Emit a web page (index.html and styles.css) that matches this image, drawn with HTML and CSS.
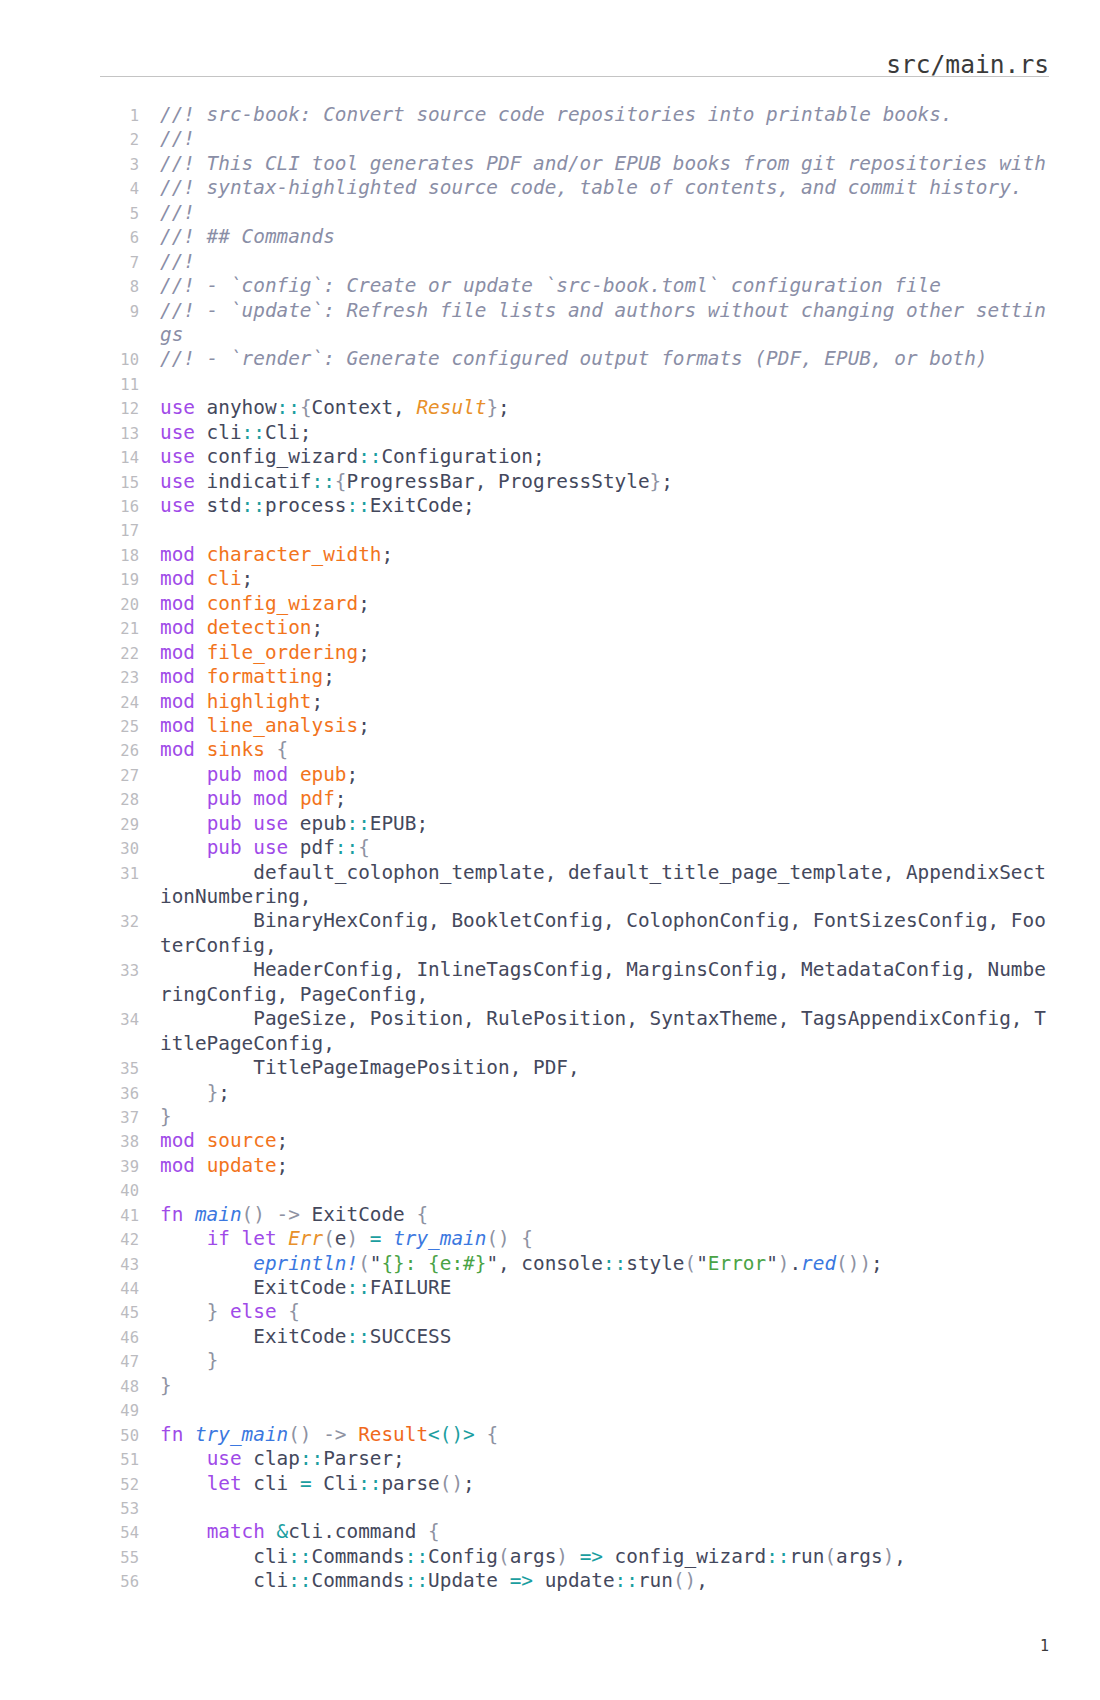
FILE: index.html
```html
<!DOCTYPE html>
<html lang="en">
<head>
<meta charset="utf-8">
<title>src/main.rs</title>
<link rel="stylesheet" href="styles.css">
</head>
<body>
<div class="page">
  <header class="hdr">src/main.rs</header>
  <div class="src">
    <div class="ln"><span class="n">1</span><span class="code"><span class="c">//! src-book: Convert source code repositories into printable books.</span></span></div>
    <div class="ln"><span class="n">2</span><span class="code"><span class="c">//!</span></span></div>
    <div class="ln"><span class="n">3</span><span class="code"><span class="c">//! This CLI tool generates PDF and/or EPUB books from git repositories with</span></span></div>
    <div class="ln"><span class="n">4</span><span class="code"><span class="c">//! syntax-highlighted source code, table of contents, and commit history.</span></span></div>
    <div class="ln"><span class="n">5</span><span class="code"><span class="c">//!</span></span></div>
    <div class="ln"><span class="n">6</span><span class="code"><span class="c">//! ## Commands</span></span></div>
    <div class="ln"><span class="n">7</span><span class="code"><span class="c">//!</span></span></div>
    <div class="ln"><span class="n">8</span><span class="code"><span class="c">//! - `config`: Create or update `src-book.toml` configuration file</span></span></div>
    <div class="ln"><span class="n">9</span><span class="code"><span class="c">//! - `update`: Refresh file lists and authors without changing other settings</span></span></div>
    <div class="ln"><span class="n">10</span><span class="code"><span class="c">//! - `render`: Generate configured output formats (PDF, EPUB, or both)</span></span></div>
    <div class="ln"><span class="n">11</span><span class="code"> </span></div>
    <div class="ln"><span class="n">12</span><span class="code"><span class="k">use</span> anyhow<span class="p">::</span><span class="b">{</span>Context, <span class="t">Result</span><span class="b">}</span>;</span></div>
    <div class="ln"><span class="n">13</span><span class="code"><span class="k">use</span> cli<span class="p">::</span>Cli;</span></div>
    <div class="ln"><span class="n">14</span><span class="code"><span class="k">use</span> config_wizard<span class="p">::</span>Configuration;</span></div>
    <div class="ln"><span class="n">15</span><span class="code"><span class="k">use</span> indicatif<span class="p">::</span><span class="b">{</span>ProgressBar, ProgressStyle<span class="b">}</span>;</span></div>
    <div class="ln"><span class="n">16</span><span class="code"><span class="k">use</span> std<span class="p">::</span>process<span class="p">::</span>ExitCode;</span></div>
    <div class="ln"><span class="n">17</span><span class="code"> </span></div>
    <div class="ln"><span class="n">18</span><span class="code"><span class="k">mod</span> <span class="m">character_width</span>;</span></div>
    <div class="ln"><span class="n">19</span><span class="code"><span class="k">mod</span> <span class="m">cli</span>;</span></div>
    <div class="ln"><span class="n">20</span><span class="code"><span class="k">mod</span> <span class="m">config_wizard</span>;</span></div>
    <div class="ln"><span class="n">21</span><span class="code"><span class="k">mod</span> <span class="m">detection</span>;</span></div>
    <div class="ln"><span class="n">22</span><span class="code"><span class="k">mod</span> <span class="m">file_ordering</span>;</span></div>
    <div class="ln"><span class="n">23</span><span class="code"><span class="k">mod</span> <span class="m">formatting</span>;</span></div>
    <div class="ln"><span class="n">24</span><span class="code"><span class="k">mod</span> <span class="m">highlight</span>;</span></div>
    <div class="ln"><span class="n">25</span><span class="code"><span class="k">mod</span> <span class="m">line_analysis</span>;</span></div>
    <div class="ln"><span class="n">26</span><span class="code"><span class="k">mod</span> <span class="m">sinks</span> <span class="b">{</span></span></div>
    <div class="ln"><span class="n">27</span><span class="code">    <span class="k">pub</span> <span class="k">mod</span> <span class="m">epub</span>;</span></div>
    <div class="ln"><span class="n">28</span><span class="code">    <span class="k">pub</span> <span class="k">mod</span> <span class="m">pdf</span>;</span></div>
    <div class="ln"><span class="n">29</span><span class="code">    <span class="k">pub</span> <span class="k">use</span> epub<span class="p">::</span>EPUB;</span></div>
    <div class="ln"><span class="n">30</span><span class="code">    <span class="k">pub</span> <span class="k">use</span> pdf<span class="p">::</span><span class="b">{</span></span></div>
    <div class="ln"><span class="n">31</span><span class="code">        default_colophon_template, default_title_page_template, AppendixSectionNumbering,</span></div>
    <div class="ln"><span class="n">32</span><span class="code">        BinaryHexConfig, BookletConfig, ColophonConfig, FontSizesConfig, FooterConfig,</span></div>
    <div class="ln"><span class="n">33</span><span class="code">        HeaderConfig, InlineTagsConfig, MarginsConfig, MetadataConfig, NumberingConfig, PageConfig,</span></div>
    <div class="ln"><span class="n">34</span><span class="code">        PageSize, Position, RulePosition, SyntaxTheme, TagsAppendixConfig, TitlePageConfig,</span></div>
    <div class="ln"><span class="n">35</span><span class="code">        TitlePageImagePosition, PDF,</span></div>
    <div class="ln"><span class="n">36</span><span class="code">    <span class="b">}</span>;</span></div>
    <div class="ln"><span class="n">37</span><span class="code"><span class="b">}</span></span></div>
    <div class="ln"><span class="n">38</span><span class="code"><span class="k">mod</span> <span class="m">source</span>;</span></div>
    <div class="ln"><span class="n">39</span><span class="code"><span class="k">mod</span> <span class="m">update</span>;</span></div>
    <div class="ln"><span class="n">40</span><span class="code"> </span></div>
    <div class="ln"><span class="n">41</span><span class="code"><span class="k">fn</span> <span class="f">main</span><span class="b">()</span> <span class="b">-&gt;</span> ExitCode <span class="b">{</span></span></div>
    <div class="ln"><span class="n">42</span><span class="code">    <span class="k">if</span> <span class="k">let</span> <span class="t">Err</span><span class="b">(</span>e<span class="b">)</span> <span class="p">=</span> <span class="f">try_main</span><span class="b">()</span> <span class="b">{</span></span></div>
    <div class="ln"><span class="n">43</span><span class="code">        <span class="f">eprintln!</span><span class="b">(</span>"<span class="s">{}: {e:#}</span>", console<span class="p">::</span>style<span class="b">(</span>"<span class="s">Error</span>"<span class="b">)</span>.<span class="f">red</span><span class="b">()</span><span class="b">)</span>;</span></div>
    <div class="ln"><span class="n">44</span><span class="code">        ExitCode<span class="p">::</span>FAILURE</span></div>
    <div class="ln"><span class="n">45</span><span class="code">    <span class="b">}</span> <span class="k">else</span> <span class="b">{</span></span></div>
    <div class="ln"><span class="n">46</span><span class="code">        ExitCode<span class="p">::</span>SUCCESS</span></div>
    <div class="ln"><span class="n">47</span><span class="code">    <span class="b">}</span></span></div>
    <div class="ln"><span class="n">48</span><span class="code"><span class="b">}</span></span></div>
    <div class="ln"><span class="n">49</span><span class="code"> </span></div>
    <div class="ln"><span class="n">50</span><span class="code"><span class="k">fn</span> <span class="f">try_main</span><span class="b">()</span> <span class="b">-&gt;</span> <span class="r">Result</span><span class="p">&lt;()&gt;</span> <span class="b">{</span></span></div>
    <div class="ln"><span class="n">51</span><span class="code">    <span class="k">use</span> clap<span class="p">::</span>Parser;</span></div>
    <div class="ln"><span class="n">52</span><span class="code">    <span class="k">let</span> cli <span class="p">=</span> Cli<span class="p">::</span>parse<span class="b">()</span>;</span></div>
    <div class="ln"><span class="n">53</span><span class="code"> </span></div>
    <div class="ln"><span class="n">54</span><span class="code">    <span class="k">match</span> <span class="p">&amp;</span>cli.command <span class="b">{</span></span></div>
    <div class="ln"><span class="n">55</span><span class="code">        cli<span class="p">::</span>Commands<span class="p">::</span>Config<span class="b">(</span>args<span class="b">)</span> <span class="p">=&gt;</span> config_wizard<span class="p">::</span>run<span class="b">(</span>args<span class="b">)</span>,</span></div>
    <div class="ln"><span class="n">56</span><span class="code">        cli<span class="p">::</span>Commands<span class="p">::</span>Update <span class="p">=&gt;</span> update<span class="p">::</span>run<span class="b">()</span>,</span></div>
  </div>
  <footer class="folio">1</footer>
</div>
</body>
</html>
```

FILE: styles.css
```css
html, body {
  margin: 0;
  padding: 0;
  background: #ffffff;
}

.page {
  width: 949px;
  margin: 0 0 0 100px;
  padding-top: 54px;
  font-family: "DejaVu Sans Mono", "Liberation Mono", monospace;
}

.hdr {
  text-align: right;
  font-size: 24.6px;
  line-height: 22px;
  color: #3a3a3a;
  border-bottom: 1px solid #c4c4c4;
}

.src {
  margin-top: 26px;
  color: #44485c;
}

.ln {
  display: flex;
  align-items: baseline;
}

.n {
  flex: none;
  width: 39px;
  margin-right: 21px;
  text-align: right;
  font-size: 15.5px;
  line-height: 1;
  color: #bbbbbf;
}

.code {
  flex: none;
  font-size: 19.37px;
  line-height: 24.43px;
  width: calc(76ch + 2px);
  white-space: pre-wrap;
  word-break: break-all;
}

.c { color: #8a8ea6; font-style: italic; }
.k { color: #a04ae8; }
.m { color: #f2741c; }
.t { color: #e8902a; font-style: italic; }
.r { color: #f0691c; }
.p { color: #1b9ea0; }
.f { color: #3b78e0; font-style: italic; }
.s { color: #4aa345; }
.b { color: #8e92a2; }

.folio {
  margin-top: 43px;
  text-align: right;
  font-size: 15px;
  color: #3a3a3a;
}
```
